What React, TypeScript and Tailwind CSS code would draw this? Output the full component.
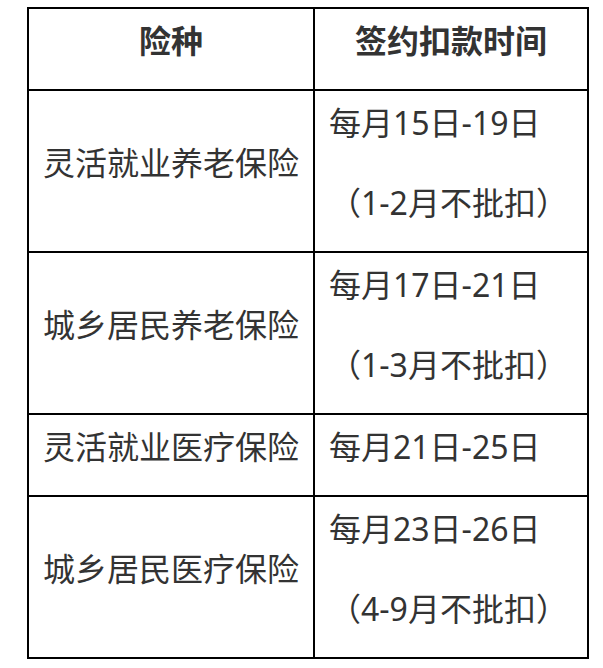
import React from "react";

const font = {
  fontFamily: '"Noto Sans", "Noto Sans CJK SC", sans-serif',
};

type Row = { name: string; lines: string[] };

const rows: Row[] = [
  { name: "灵活就业养老保险", lines: ["每月15日-19日", "（1-2月不批扣）"] },
  { name: "城乡居民养老保险", lines: ["每月17日-21日", "（1-3月不批扣）"] },
  { name: "灵活就业医疗保险", lines: ["每月21日-25日"] },
  { name: "城乡居民医疗保险", lines: ["每月23日-26日", "（4-9月不批扣）"] },
];

export default function App() {
  return (
    <div className="w-[603px] h-[668px] bg-white pt-[7px] pl-[27px]" style={font}>
      <div className="w-[562px] border-2 border-black grid grid-cols-[284px_272px] gap-x-[2px] bg-black gap-y-[2px] text-[32px] text-[#333]">
        <div className="bg-white flex items-center justify-center">
          <p className="leading-[64px] mb-4 font-bold">险种</p>
        </div>
        <div className="bg-white flex items-center justify-center">
          <p className="leading-[64px] mb-4 font-bold">签约扣款时间</p>
        </div>
        {rows.map((r) => (
          <React.Fragment key={r.name}>
            <div className="bg-white flex items-center justify-center">
              <p className="leading-[64px] mb-4">{r.name}</p>
            </div>
            <div className="bg-white flex flex-col items-start pl-[14px]">
              {r.lines.map((l) => (
                <p key={l} className="leading-[64px] mb-4 whitespace-nowrap">
                  {l}
                </p>
              ))}
            </div>
          </React.Fragment>
        ))}
      </div>
    </div>
  );
}
